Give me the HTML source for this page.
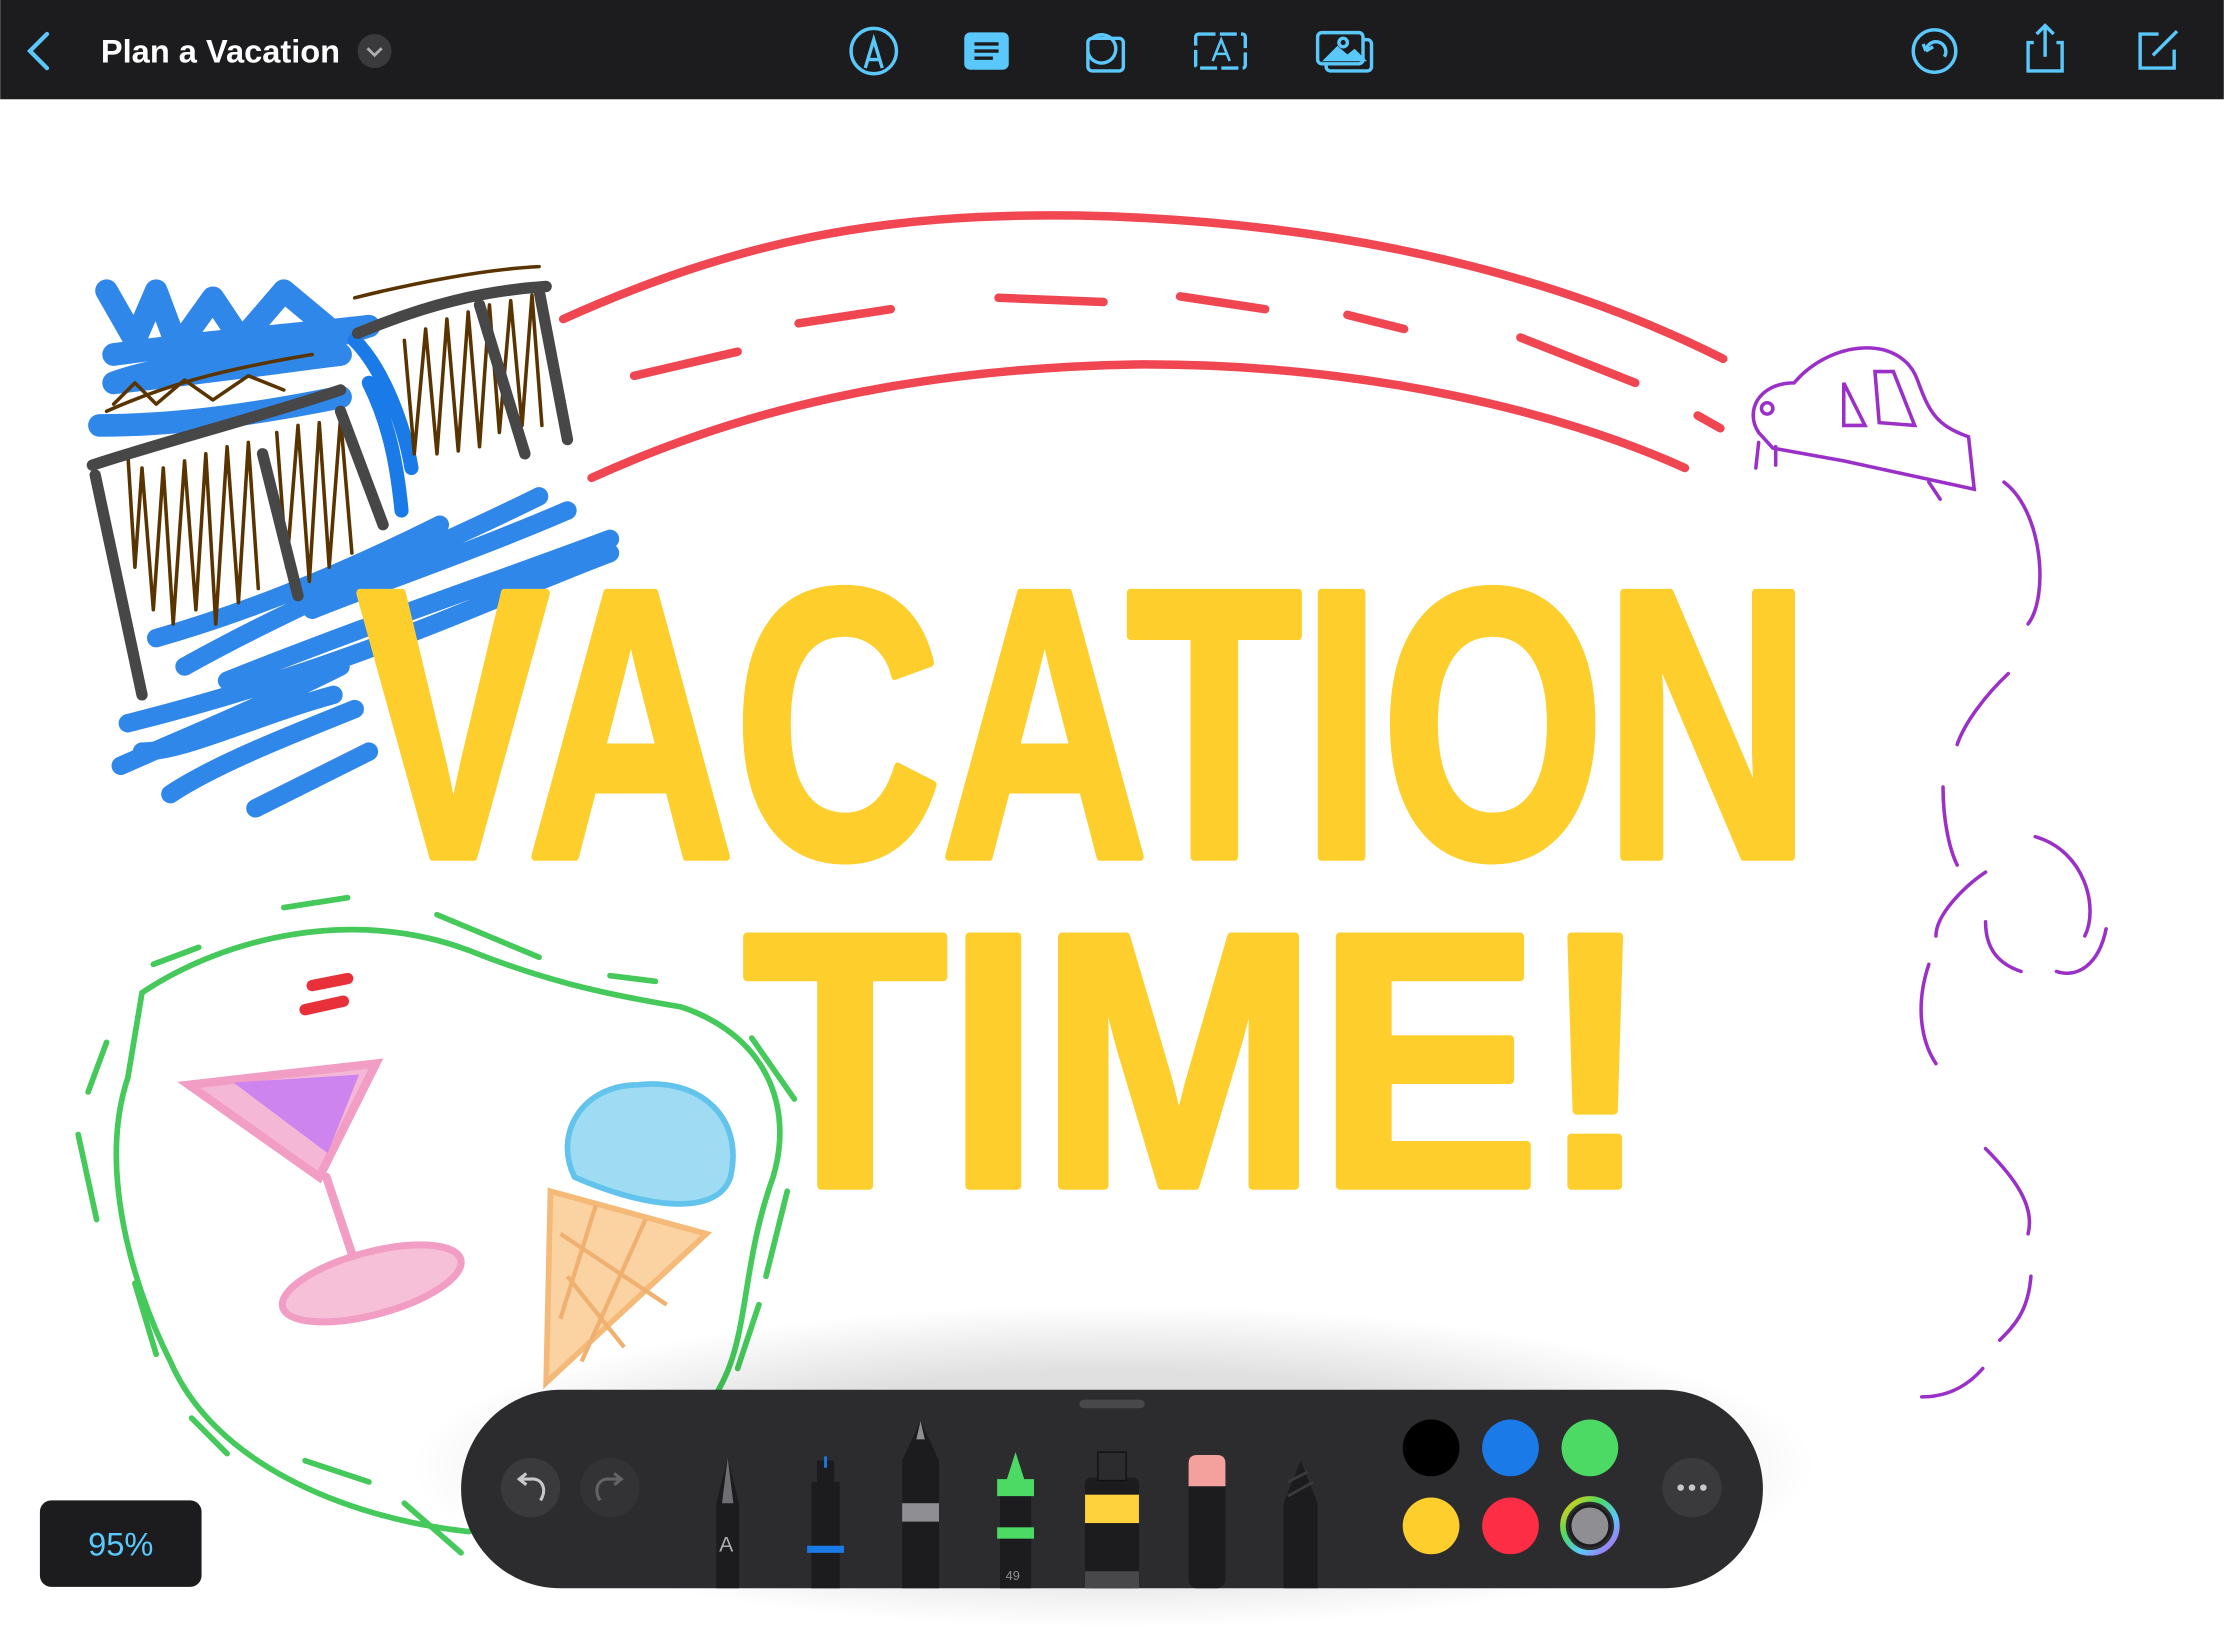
<!DOCTYPE html>
<html><head><meta charset="utf-8"><style>
html,body{margin:0;padding:0;background:#fff;overflow:hidden}
body{width:2224px;height:1628px;position:relative;font-family:"Liberation Sans",sans-serif}
svg{position:absolute;left:0;top:0}
</style></head><body>
<svg width="2224" height="1628" viewBox="0 0 1568 1148" xmlns="http://www.w3.org/2000/svg">
<defs>
<radialGradient id="sh" cx="0.5" cy="0.5" r="0.5"><stop offset="0.6" stop-color="#000" stop-opacity="0.12"/><stop offset="1" stop-color="#000" stop-opacity="0"/></radialGradient>
<linearGradient id="rb" x1="0" y1="0" x2="1" y2="1"><stop offset="0" stop-color="#ffcc00"/><stop offset="0.35" stop-color="#4cd964"/><stop offset="0.65" stop-color="#5ac8fa"/><stop offset="1" stop-color="#bf5af2"/></linearGradient>
</defs>
<rect width="1568" height="1148" fill="#fff"/>
<!-- top bar -->
<rect width="1568" height="70" fill="#1c1c1e"/>
<path d="M33 24 L21 36 L33 48" stroke="#5ac8fa" stroke-width="3" fill="none" stroke-linecap="round"/>
<text x="71" y="44" fill="#fff" font-size="23" font-weight="bold" font-family="Liberation Sans,sans-serif">Plan a Vacation</text>
<circle cx="264" cy="36" r="12" fill="#3a3a3c"/>
<path d="M259 34 L264 39 L269 34" stroke="#aeaeb2" stroke-width="2" fill="none"/>
<g stroke="#5ac8fa" stroke-width="2.4" fill="none">
<circle cx="616" cy="36" r="16"/><path d="M610 48 L616 28 L622 48 M612 42 H620"/>
<rect x="681" y="24" width="29" height="24" rx="3" fill="#5ac8fa"/><path d="M687 31H704M687 36H704M687 41H700" stroke="#1c1c1e"/>
<rect x="767" y="27" width="25" height="23" rx="3"/><path d="M770 27 A10 10 0 1 1 767 37" />
<rect x="843" y="24" width="35" height="24" rx="2" stroke-dasharray="12 3"/><path d="M855 43 L861 28 L867 43 M857 38H865" stroke-width="1.8"/>
<rect x="935" y="28" width="32" height="22" rx="3"/><rect x="929" y="23" width="32" height="22" rx="3" fill="#1c1c1e"/><path d="M935 42 L943 34 L950 40 L955 36 L961 42Z" fill="#5ac8fa"/><circle cx="947" cy="30" r="3"/>
<circle cx="1364" cy="36" r="15"/><path d="M1371 40 A7 7 0 1 0 1358 36 M1358 36 L1356 31 M1358 36 L1363 33"/>
<path d="M1434 30 H1430 V50 H1454 V30 H1450 M1442 40 V18 M1436 24 L1442 18 L1448 24"/>
<path d="M1522 24 H1509 V48 H1533 V35 M1518 39 L1535 22"/>
</g>
<!-- red road -->
<g stroke="#ee3340" fill="none" stroke-linecap="round" stroke-width="6" opacity="0.9">
<path d="M397 225 C520 170 620 150 760 152 C960 156 1110 200 1215 253"/>
<path d="M417 337 C520 290 640 260 800 257 C960 256 1100 290 1188 330"/>
<path d="M447 265 L520 248 M563 228 L628 218 M704 210 L778 213 M832 209 L892 218 M950 222 L990 232 M1072 238 L1153 270 M1197 293 L1213 302"/>
</g>
<!-- purple car + path -->
<g stroke="#9b30c8" fill="none" stroke-width="2.5" stroke-linecap="round">
<path d="M1240 305 C1230 290 1240 270 1265 270 C1290 240 1340 235 1352 268 C1360 290 1365 300 1388 308 L1392 345 L1300 325 L1250 316 Z"/>
<path d="M1300 270 L1315 300 L1300 300 Z M1322 262 L1335 262 L1350 300 L1325 298 Z"/>
<circle cx="1246" cy="288" r="4"/><path d="M1240 312 L1238 330 M1252 315 L1252 328 M1360 340 L1368 352"/>
<path d="M1413 340 C1440 360 1445 420 1430 440 M1416 475 C1400 490 1385 510 1380 525 M1370 555 C1370 580 1375 600 1380 610 M1435 590 C1470 600 1480 640 1470 660 M1485 655 C1480 680 1465 690 1450 685 M1400 615 C1385 625 1365 645 1365 660 M1400 650 C1400 670 1410 680 1425 685 M1360 680 C1350 710 1355 735 1365 750 M1400 810 C1420 830 1435 850 1430 870 M1432 900 C1430 925 1420 935 1410 945 M1398 965 C1385 980 1370 985 1355 985"/>
</g>
<!-- building -->
<g fill="none" stroke-linecap="round" stroke-linejoin="round">
<path d="M75 205 L95 240 L110 205 L125 245 L150 210 L170 240 L200 205 L230 230 M80 250 C150 240 220 235 260 230 C200 250 120 255 80 270 C150 262 200 255 240 250 M70 300 C130 300 190 290 240 280" stroke="#1a7ae8" stroke-width="16" opacity="0.9"/>
<path d="M250 240 C270 260 285 300 290 330 M260 270 C275 300 280 330 283 360" stroke="#1a7ae8" stroke-width="10"/>
<path d="M310 370 C250 400 180 430 110 450 M380 350 C300 390 220 420 130 470 M430 380 C350 410 260 440 160 480 M430 390 C350 420 250 470 90 510 M240 470 C180 500 130 520 85 540 M250 500 C200 520 150 540 120 560 M260 530 C230 545 200 560 180 570 M400 360 C330 390 270 410 220 430 M235 490 C180 505 130 530 100 530" stroke="#1a7ae8" stroke-width="13" opacity="0.9"/>
<path d="M90 320 L95 400 L100 330 L108 430 L115 330 L122 440 L130 325 L138 430 L145 320 L152 440 L160 315 L168 425 L175 312 L182 415 M195 305 L202 400 L210 300 L218 410 L225 298 L232 400 L240 295 L248 390 M285 240 L292 320 L300 232 L308 320 L315 225 L323 318 L330 220 L338 315 L345 215 L352 305 L360 212 L368 300 L375 208 L382 300" stroke="#5a3400" stroke-width="2.5"/>
<path d="M75 290 C120 270 160 260 220 250 M250 210 C290 200 340 190 380 188 M80 285 L95 270 L110 285 L130 268 L150 282 L175 265 L200 275" stroke="#5a3400" stroke-width="2.5"/>
<path d="M65 328 C120 310 180 295 240 275 M252 235 C300 215 340 205 385 202" stroke="#474747" stroke-width="8"/>
<path d="M67 335 L100 490 M185 320 L210 420 M240 290 L270 370 M338 215 L370 320 M380 205 L400 310" stroke="#474747" stroke-width="8"/>
</g>
<!-- VACATION TIME! -->
<g fill="#fdce2c" stroke="#fdce2c" stroke-width="6" stroke-linejoin="round" font-family="Liberation Sans Narrow,Liberation Sans,sans-serif" font-weight="bold">
<text x="252" y="604" font-size="270" textLength="1025" lengthAdjust="spacingAndGlyphs">VACATION</text>
<text x="524" y="836" font-size="255" textLength="640" lengthAdjust="spacingAndGlyphs">TIME!</text>
</g>
<!-- green wavy -->
<g stroke="#44c95a" fill="none" stroke-width="4" stroke-linecap="round">
<path d="M100 700 C160 660 250 640 330 670 C380 690 420 700 480 710 C540 730 560 780 545 830 C520 900 530 950 500 990 C470 1030 420 1060 330 1080 C240 1070 150 1030 120 960 C90 900 70 820 90 760 Z"/>
<path d="M200 640 L245 633 M308 645 L380 675 M430 688 L462 692 M530 732 L560 775 M555 840 L540 900 M535 920 L520 965 M108 680 L140 668 M75 735 L62 770 M55 800 L68 860 M95 905 L110 955 M135 1000 L160 1025 M215 1030 L260 1045 M285 1060 L325 1095"/>
</g>
<!-- cocktail -->
<g fill="none" stroke-linecap="round">
<path d="M220 695 L245 690 M215 712 L242 706" stroke="#e8303a" stroke-width="8"/>
<path d="M133 765 L265 750 L225 830 Z" stroke="#f29dc4" stroke-width="6" fill="#f4b8d6"/>
<path d="M170 765 L250 760 L230 810 Z" fill="#cd84ee" stroke="#cd84ee" stroke-width="4"/>
<path d="M230 830 L250 890" stroke="#f29dc4" stroke-width="6"/>
<ellipse cx="262" cy="905" rx="65" ry="22" transform="rotate(-15 262 905)" stroke="#f29dc4" stroke-width="5" fill="#f6c1d8"/>
</g>
<!-- ice cream -->
<path d="M388 840 L498 870 L385 975 Z" fill="#fbd3a3" stroke="#f5b978" stroke-width="4"/>
<path d="M395 870 L470 920 M400 900 L440 950 M420 850 L395 930 M455 860 L410 960" stroke="#f0b070" stroke-width="3"/>
<path d="M405 830 C390 800 410 765 450 765 C490 760 525 785 515 830 C505 860 450 850 405 830 Z" fill="#9fdcf4" stroke="#62c3ec" stroke-width="4"/>
<!-- toolbar shadow -->
<rect x="290" y="920" width="990" height="228" rx="110" fill="url(#sh)"/>
<rect x="325" y="980" width="918" height="140" rx="70" fill="#2c2c2e"/>
<rect x="761" y="987" width="46" height="6" rx="3" fill="#48484a"/>
<circle cx="374" cy="1049" r="21" fill="#3a3a3c"/><circle cx="430" cy="1049" r="21" fill="#333335"/>
<path d="M381 1058 C386 1050 382 1042 374 1043 H367 M371 1039 L366 1043 L371 1047" stroke="#c7c7cc" stroke-width="2.2" fill="none"/>
<path d="M423 1058 C418 1050 422 1042 430 1043 H437 M433 1039 L438 1043 L433 1047" stroke="#636366" stroke-width="2.2" fill="none"/>
<circle cx="1193" cy="1049" r="21" fill="#3a3a3c"/>
<circle cx="1185" cy="1049" r="2.3" fill="#c7c7cc"/><circle cx="1193" cy="1049" r="2.3" fill="#c7c7cc"/><circle cx="1201" cy="1049" r="2.3" fill="#c7c7cc"/>
<!-- tools -->
<path d="M505 1120 V1060 L513 1028 L521 1060 V1120Z" fill="#1c1c1e"/><path d="M509 1060 L513 1028 L517 1060Z" fill="#6e6e73"/>
<text x="507" y="1094" fill="#aeaeb2" font-size="15">A</text>
<rect x="572" y="1045" width="20" height="75" fill="#1c1c1e"/><rect x="576" y="1030" width="12" height="18" fill="#1c1c1e"/><rect x="581" y="1027" width="2" height="8" fill="#1a7ae8"/><rect x="569" y="1090" width="26" height="5" fill="#1a7ae8"/>
<path d="M636 1120 V1030 L649 1002 L662 1030 V1120Z" fill="#1c1c1e"/><path d="M646 1015 L649 1002 L652 1015Z" fill="#8e8e93"/><rect x="636" y="1060" width="26" height="13" fill="#8e8e93"/>
<rect x="705" y="1052" width="22" height="68" fill="#1c1c1e"/><path d="M707 1052 L716 1024 L725 1052Z" fill="#4cd964"/><rect x="703" y="1043" width="26" height="12" fill="#4cd964"/><rect x="703" y="1077" width="26" height="8" fill="#4cd964"/>
<text x="709" y="1114" fill="#8e8e93" font-size="9">49</text>
<rect x="765" y="1042" width="38" height="78" rx="4" fill="#1c1c1e"/><rect x="774" y="1024" width="20" height="20" fill="#2c2c2e" stroke="#111" /><rect x="765" y="1054" width="38" height="20" fill="#fdd23c"/><rect x="765" y="1108" width="38" height="12" fill="#48484a"/>
<rect x="838" y="1026" width="26" height="94" rx="6" fill="#1c1c1e"/><path d="M838 1048 V1032 Q838 1026 844 1026 H858 Q864 1026 864 1032 V1048Z" fill="#f4a09c"/>
<path d="M905 1120 V1060 L917 1030 L929 1060 V1120Z" fill="#1c1c1e"/><path d="M908 1055 L926 1045 M908 1045 L922 1038" stroke="#3a3a3c" stroke-width="2"/>
<!-- colors -->
<circle cx="1009" cy="1021" r="20" fill="#000"/><circle cx="1065" cy="1021" r="20" fill="#1a7ae8"/><circle cx="1121" cy="1021" r="20" fill="#4cd964"/>
<circle cx="1009" cy="1076" r="20" fill="#fdce2c"/><circle cx="1065" cy="1076" r="20" fill="#fc2d45"/>
<circle cx="1121" cy="1076" r="19" fill="none" stroke="url(#rb)" stroke-width="4"/><circle cx="1121" cy="1076" r="14" fill="#8e8e93" stroke="#1c1c1e" stroke-width="2"/>
<!-- zoom badge -->
<rect x="28" y="1058" width="114" height="61" rx="8" fill="#1c1c1e"/>
<text x="85" y="1097" fill="#5ac8fa" font-size="23" text-anchor="middle" font-family="Liberation Sans,sans-serif">95%</text>
</svg>
</body></html>
